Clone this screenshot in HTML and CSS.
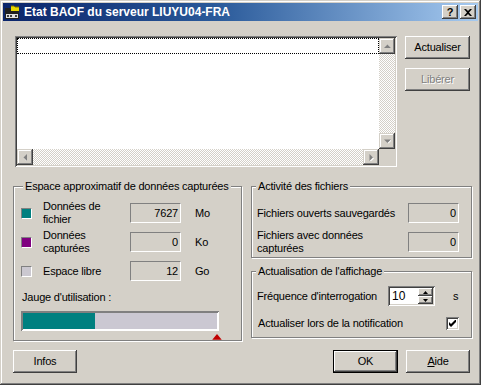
FILE: index.html
```html
<!DOCTYPE html>
<html lang="fr">
<head>
<meta charset="utf-8">
<title>Etat BAOF</title>
<link rel="stylesheet" href="styles.css">
</head>
<body>
<div class="window">
  <div class="titlebar">
    <svg class="ticon" width="16" height="16" viewBox="0 0 16 16">
      <rect x="1" y="5" width="14" height="10" fill="#202020"/>
      <rect x="1" y="4" width="5" height="2" fill="#202020"/>
      <path d="M7 2h3l1 1h4v4H7z" fill="#e8d800"/>
      <path d="M7 2h3l1 1h4" fill="none" stroke="#807000" stroke-width="1"/>
      <rect x="2" y="10" width="12" height="4" fill="#e0e0e0"/>
      <rect x="3" y="11" width="2" height="2" fill="#404040"/>
      <rect x="6" y="11" width="2" height="2" fill="#404040"/>
      <rect x="11" y="11" width="2" height="2" fill="#404040"/>
    </svg>
    <span class="ttext">Etat BAOF du serveur LIUYU04-FRA</span>
    <div class="tbtns">
      <span class="tbtn q">?</span>
      <span class="tbtn">
        <svg width="8" height="7" viewBox="0 0 8 7"><path d="M0 0h2l2 2 2-2h2L5 3.5 8 7H6L4 5 2 7H0l3-3.5z" fill="#000"/></svg>
      </span>
    </div>
  </div>

  <div class="top">
    <div class="listbox">
      <div class="list-area"><div class="focus-row"></div></div>
      <div class="vscroll">
        <span class="sbtn"><svg width="7" height="5" viewBox="0 0 7 5"><path d="M4 1l3 3H1z" fill="#fff"/><path d="M3.5 0.5L7 4H0z" fill="#808080"/></svg></span>
        <span class="track"></span>
        <span class="sbtn"><svg width="7" height="5" viewBox="0 0 7 5"><path d="M1 1h7L4.5 4.5z" fill="#fff"/><path d="M0 0.5h7L3.5 4z" fill="#808080"/></svg></span>
      </div>
      <div class="hscroll">
        <span class="sbtn"><svg width="5" height="7" viewBox="0 0 5 7"><path d="M1 4l3-3v7z" fill="#fff"/><path d="M0.5 3.5L4 0v7z" fill="#808080"/></svg></span>
        <span class="track"></span>
        <span class="sbtn"><svg width="5" height="7" viewBox="0 0 5 7"><path d="M1 1l4 3.5L1 8z" fill="#fff"/><path d="M0.5 0L4 3.5 0.5 7z" fill="#808080"/></svg></span>
      </div>
      <div class="corner"></div>
    </div>
    <div class="side-btns">
      <button class="btn">Actualiser</button>
      <button class="btn disabled">Libérer</button>
    </div>
  </div>

  <div class="middle">
    <div class="group g-space">
      <span class="gtitle gt-space">Espace approximatif de données capturées</span>
      <div class="space-grid">
        <span class="swatch teal"></span>
        <span class="lbl">Données de<br>fichier</span>
        <span class="val">7627</span>
        <span class="unit">Mo</span>

        <span class="swatch purple"></span>
        <span class="lbl">Données<br>capturées</span>
        <span class="val">0</span>
        <span class="unit">Ko</span>

        <span class="swatch free"></span>
        <span class="lbl">Espace libre</span>
        <span class="val">12</span>
        <span class="unit">Go</span>
      </div>
      <div class="gauge-label">Jauge d'utilisation :</div>
      <div class="gauge"><div class="gauge-fill" style="width:72px"></div></div>
      <svg class="marker" width="10" height="6" viewBox="0 0 10 6"><path d="M5 0L10 6H0z" fill="#c00000"/></svg>
    </div>

    <div class="right-col">
      <div class="group g-act">
        <span class="gtitle gt-right">Activité des fichiers</span>
        <div class="act-grid">
          <span class="lbl">Fichiers ouverts sauvegardés</span>
          <span class="val">0</span>
          <span class="lbl">Fichiers avec données<br>capturées</span>
          <span class="val">0</span>
        </div>
      </div>
      <div class="group g-refresh">
        <span class="gtitle gt-right">Actualisation de l'affichage</span>
        <div class="freq-row">
          <span class="freq-lbl">Fréquence d'interrogation</span>
          <div class="spin">
            <span class="spin-val">10</span>
            <div class="spin-btns">
              <span class="spin-btn"><svg width="5" height="3" viewBox="0 0 5 3"><path d="M2.5 0L5 3H0z" fill="#000"/></svg></span>
              <span class="spin-btn"><svg width="5" height="3" viewBox="0 0 5 3"><path d="M0 0h5L2.5 3z" fill="#000"/></svg></span>
            </div>
          </div>
          <span class="sec">s</span>
        </div>
        <div class="notif-row">
          <span class="notif-lbl">Actualiser lors de la notification</span>
          <span class="check"><svg width="7" height="7" viewBox="0 0 7 7"><path d="M0 2l2 2 5-5v3L2 7 0 5z" fill="#000"/></svg></span>
        </div>
      </div>
    </div>
  </div>

  <div class="bottom">
    <button class="btn infos">Infos</button>
    <span class="spacer"></span>
    <button class="btn default">OK</button>
    <button class="btn aide"><u>A</u>ide</button>
  </div>
</div>
</body>
</html>
```

FILE: styles.css
```css
html, body {
  margin: 0;
  padding: 0;
  background: #d4d0c8;
}

.window {
  width: 481px;
  height: 385px;
  box-sizing: border-box;
  padding: 3px;
  background: #d4d0c8;
  box-shadow: inset -1px -1px #404040, inset 1px 1px #d4d0c8,
              inset -2px -2px #808080, inset 2px 2px #ffffff;
  font: 11px/13px "Liberation Sans", Arial, sans-serif;
  letter-spacing: -0.2px;
  color: #000;
  display: flex;
  flex-direction: column;
}

/* title bar */
.titlebar {
  height: 18px;
  flex: none;
  background: linear-gradient(90deg, #0a246a 0%, #2a5a9a 45%, #a6caf0 100%);
  display: flex;
  align-items: center;
  color: #fff;
  font-weight: bold;
  font-size: 12px;
  letter-spacing: 0;
}
.ticon {
  margin-left: 1px;
  flex: none;
}
.ttext {
  margin-left: 4px;
  white-space: nowrap;
}
.tbtns {
  margin-left: auto;
  margin-right: 2px;
  display: flex;
  gap: 2px;
}
.tbtn {
  width: 16px;
  height: 14px;
  box-sizing: border-box;
  background: #d4d0c8;
  box-shadow: inset -1px -1px #404040, inset 1px 1px #fff,
              inset -2px -2px #808080, inset 2px 2px #d4d0c8;
  display: flex;
  align-items: center;
  justify-content: center;
  color: #000;
}
.tbtn.q {
  font: bold 11px/14px "Liberation Sans", Arial, sans-serif;
}

/* top area */
.top {
  display: flex;
  gap: 8px;
  margin: 15px 0 0 12px;
}
.listbox {
  width: 382px;
  height: 131px;
  box-sizing: border-box;
  padding: 2px;
  background: #fff;
  box-shadow: inset 1px 1px #808080, inset -1px -1px #fff,
              inset 2px 2px #404040, inset -2px -2px #d4d0c8;
  display: grid;
  grid-template-columns: 1fr 16px;
  grid-template-rows: 1fr 16px;
}
.list-area {
  background: #fff;
}
.focus-row {
  height: 16px;
  box-sizing: border-box;
  border: 1px dotted #000;
}
.vscroll {
  display: flex;
  flex-direction: column;
}
.hscroll {
  display: flex;
}
.track {
  flex: 1;
  background: repeating-conic-gradient(#d4d0c8 0 25%, #ffffff 0 50%) 0 0 / 2px 2px;
}
.corner {
  background: #d4d0c8;
}
.sbtn {
  width: 16px;
  height: 16px;
  flex: none;
  box-sizing: border-box;
  background: #d4d0c8;
  box-shadow: inset -1px -1px #404040, inset 1px 1px #d4d0c8,
              inset -2px -2px #808080, inset 2px 2px #fff;
  display: flex;
  align-items: center;
  justify-content: center;
}

.side-btns {
  display: flex;
  flex-direction: column;
  gap: 9px;
}

/* buttons */
.btn {
  width: 65px;
  height: 23px;
  box-sizing: border-box;
  margin: 0;
  padding: 0;
  border: none;
  background: #d4d0c8;
  font: 11px/13px "Liberation Sans", Arial, sans-serif;
  letter-spacing: -0.2px;
  color: #000;
  box-shadow: inset -1px -1px #404040, inset 1px 1px #fff,
              inset -2px -2px #808080, inset 2px 2px #d4d0c8;
}
.btn.disabled {
  color: #808080;
  text-shadow: 1px 1px #fff;
}
.btn.default {
  border: 1px solid #000;
}
.btn.infos {
  width: 64px;
}
.btn.aide {
  width: 64px;
}
.btn u {
  text-decoration: underline;
}

/* middle */
.middle {
  display: flex;
  gap: 8px;
  margin: 19px 0 0 10px;
}
.group {
  position: relative;
  box-sizing: border-box;
  border: 1px solid #808080;
  box-shadow: inset 1px 1px #fff, 1px 1px #fff;
  margin-right: 1px;
}
.gtitle {
  position: absolute;
  top: -7px;
  padding: 0 2px;
  background: #d4d0c8;
  white-space: nowrap;
  line-height: 13px;
}
.gt-space { left: 9px; }
.gt-right { left: 4px; }

.g-space {
  width: 229px;
  height: 155px;
  padding: 16px 0 0 7px;
  display: flex;
  flex-direction: column;
}
.space-grid {
  display: grid;
  grid-template-columns: 22px 87px 51px auto;
  grid-auto-rows: 20px;
  row-gap: 9px;
  align-items: center;
}
.swatch {
  width: 11px;
  height: 11px;
  box-sizing: border-box;
  border: 1px solid;
  border-color: #808080 #fff #fff #808080;
}
.swatch.teal { background: #008080; }
.swatch.purple { background: #800080; }
.swatch.free { background: #cbc8d0; }
.lbl {
  line-height: 13px;
}
.val {
  height: 20px;
  box-sizing: border-box;
  border: 1px solid;
  border-color: #808080 #fff #fff #808080;
  text-align: right;
  padding-right: 2px;
  line-height: 18px;
}
.unit {
  margin-left: 14px;
}
.gauge-label {
  margin-top: 10px;
  margin-left: 1px;
}
.gauge {
  margin-top: 7px;
  width: 198px;
  height: 21px;
  box-sizing: border-box;
  padding: 2px;
  background: #cbc8d2;
  box-shadow: inset 1px 1px #808080, inset -1px -1px #fff,
              inset 2px 2px #808080, inset -2px -2px #fff;
}
.gauge-fill {
  height: 100%;
  background: #008080;
}
.marker {
  display: block;
  margin: 3px 0 0 191px;
}

.right-col {
  display: flex;
  flex-direction: column;
  gap: 13px;
}
.g-act {
  width: 221px;
  height: 72px;
  padding: 16px 12px 0 5px;
}
.act-grid {
  display: grid;
  grid-template-columns: 1fr 51px;
  grid-auto-rows: 20px;
  row-gap: 9px;
  align-items: center;
}
.g-refresh {
  width: 221px;
  height: 67px;
  padding: 14px 12px 0 5px;
}
.freq-row {
  display: flex;
  align-items: center;
  height: 20px;
}
.freq-lbl {
  width: 131px;
  flex: none;
}
.spin {
  width: 47px;
  height: 20px;
  box-sizing: border-box;
  padding: 2px;
  background: #fff;
  box-shadow: inset 1px 1px #808080, inset -1px -1px #fff,
              inset 2px 2px #404040, inset -2px -2px #d4d0c8;
  display: flex;
}
.spin-val {
  flex: 1;
  padding-left: 2px;
  font-size: 12px;
  line-height: 16px;
  letter-spacing: 0;
}
.spin-btns {
  width: 15px;
  display: flex;
  flex-direction: column;
}
.spin-btn {
  flex: 1;
  background: #d4d0c8;
  box-shadow: inset -1px -1px #404040, inset 1px 1px #fff,
              inset -2px -2px #808080;
  display: flex;
  align-items: center;
  justify-content: center;
}
.sec {
  margin-left: 18px;
}
.notif-row {
  display: flex;
  align-items: center;
  height: 20px;
  margin-top: 7px;
  padding-left: 1px;
}
.notif-lbl {
  flex: 1;
}
.check {
  width: 13px;
  height: 13px;
  box-sizing: border-box;
  background: #fff;
  box-shadow: inset 1px 1px #808080, inset -1px -1px #fff,
              inset 2px 2px #404040, inset -2px -2px #d4d0c8;
  display: flex;
  align-items: center;
  justify-content: center;
}

/* bottom */
.bottom {
  display: flex;
  gap: 8px;
  margin: 9px 8px 0 10px;
}
.spacer {
  flex: 1;
}
```
